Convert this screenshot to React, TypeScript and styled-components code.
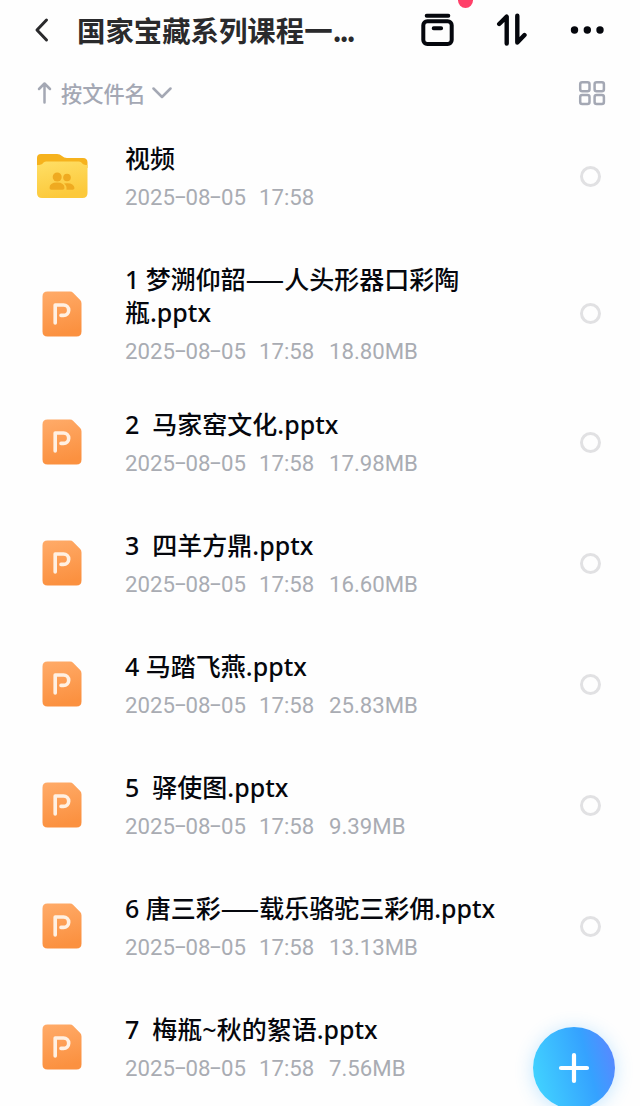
import React from 'react';
import styled, { createGlobalStyle } from 'styled-components';

const Global = createGlobalStyle`
  *, *::before, *::after { box-sizing: border-box; }
  body { margin: 0; background: #fefefe; }
`;

const Screen = styled.main`
  position: relative;
  width: 640px;
  height: 1106px;
  overflow: hidden;
  background: #fefefe;
  font-family: Roboto, 'Noto Sans CJK SC', sans-serif;
  color: #05070d;
`;

const Header = styled.header`
  display: flex;
  align-items: center;
  height: 60px;
  padding: 0 34px 1px 33px;
`;

const Title = styled.h1`
  flex: 1;
  margin: 0 0 0 27px;
  font-family: 'Noto Sans CJK SC', sans-serif;
  font-size: 28.4px;
  font-weight: 700;
  line-height: 40px;
  color: #2a2a2c;
  white-space: nowrap;
`;

const Ellipsis = styled.span`
  letter-spacing: -2.2px;
`;

const Actions = styled.nav`
  display: flex;
  align-items: center;
  gap: 42px;
`;

const IconButton = styled.button`
  position: relative;
  display: flex;
  padding: 0;
  border: 0;
  background: none;
  color: inherit;
`;

const Badge = styled.span`
  position: absolute;
  top: -20px;
  right: -19px;
  width: 15px;
  height: 15px;
  border-radius: 50%;
  background: #ff4069;
`;

const SortBar = styled.div`
  display: flex;
  align-items: center;
  justify-content: space-between;
  height: 55px;
  padding: 11px 34px 0 36px;
  color: #a4a8b4;
`;

const SortButton = styled.button`
  display: flex;
  align-items: center;
  padding: 0;
  border: 0;
  background: none;
  color: inherit;
  font-family: 'Noto Sans CJK SC', sans-serif;
  font-size: 21.2px;
  font-weight: 500;
  line-height: 30px;
`;

const SortLabel = styled.span`
  margin: 0 6px 0 7px;
`;

const List = styled.ul`
  margin: 0;
  padding: 0;
  list-style: none;
`;

const Row = styled.li`
  min-height: 121px;
  padding: 27px 39px 17px 36px;
`;

const RowBody = styled.div`
  display: flex;
  align-items: center;
`;

const IconSlot = styled.div`
  display: flex;
  justify-content: center;
  width: 52px;
  margin-right: 37px;
`;

const Details = styled.div`
  flex: 1;
`;

const Name = styled.div`
  height: 33px;
  padding-top: 1px;
  font-size: 25px;
  font-weight: 500;
  line-height: 33px;
  white-space: pre;
`;

const Latin = styled.span`
  font-family: 'Noto Sans', sans-serif;
  line-height: 0;
`;

const Dash = styled.span`
  font-family: 'Noto Sans CJK SC', sans-serif;
  font-size: 22.5px;
  font-weight: 700;
  line-height: 0;
  vertical-align: 1px;
`;

const Meta = styled.div`
  display: flex;
  height: 35px;
  padding-top: 6px;
  font-family: Roboto, sans-serif;
  font-size: 22.2px;
  font-weight: 400;
  line-height: 33px;
  color: #a9acb3;
  white-space: nowrap;
`;

const DateText = styled.span`
  width: 134px;
`;

const Hyphen = styled.span`
  display: inline-block;
  width: 10.6px;
  line-height: 1;
  text-align: center;
  transform: translateY(-1px) scaleX(1.75);
`;

const TimeText = styled.span`
  width: 70px;
`;

const SizeText = styled.span``;

const Radio = styled.span`
  width: 21px;
  height: 21px;
  border: 3px solid #e1e1e3;
  border-radius: 50%;
`;

const AddButton = styled.button`
  position: absolute;
  left: 533px;
  top: 1027px;
  display: flex;
  align-items: center;
  justify-content: center;
  width: 82px;
  height: 82px;
  padding: 0;
  border: 0;
  border-radius: 50%;
  background: linear-gradient(75deg, #41d2ff 8%, #35a2ff 65%, #5b86ff 95%);
  box-shadow: 0 2px 18px rgba(60, 175, 255, 0.3);
`;

const BackIcon = () => (
  <svg width="17" height="26" viewBox="0 0 17 26" fill="none" stroke="#2a2a2c" strokeWidth="3" strokeLinecap="round" strokeLinejoin="round">
    <path d="M13.5 3 4 13l9.500 10" />
  </svg>
);

const BoxIcon = () => (
  <svg width="34" height="34" viewBox="0 0 34 34" fill="none" stroke="currentColor" strokeWidth="4" strokeLinecap="round">
    <path d="M6.700 2.700h21.600M13.700 15.200h7.400" />
    <rect x="3.300" y="8.200" width="28.400" height="22.800" rx="4" />
  </svg>
);

const TransferIcon = () => (
  <svg width="32" height="34" viewBox="0 0 32 34" fill="none" stroke="currentColor" strokeWidth="4.400" strokeLinecap="round" strokeLinejoin="round">
    <path d="M3.200 11 10.700 3.700v26.800M21.300 2.700v26.800l7.200-7.500" />
  </svg>
);

const MoreIcon = () => (
  <svg width="36" height="10" viewBox="0 0 36 10" fill="currentColor">
    <circle cx="4.500" cy="5" r="3.700" />
    <circle cx="17.300" cy="5" r="3.700" />
    <circle cx="30" cy="5" r="3.700" />
  </svg>
);

const ArrowUpIcon = () => (
  <svg width="18" height="24" viewBox="0 0 18 24" fill="none" stroke="currentColor" strokeWidth="2.500" strokeLinecap="round" strokeLinejoin="round">
    <path d="M8.500 21.500V2.500M3 8l5.500-5.500L14 8" />
  </svg>
);

const ChevronIcon = () => (
  <svg width="20" height="14" viewBox="0 0 20 14" fill="none" stroke="currentColor" strokeWidth="2.500" strokeLinecap="round" strokeLinejoin="round">
    <path d="m1.500 2.500 8.500 8.500 8.500-8.500" />
  </svg>
);

const GridIcon = () => (
  <svg width="28" height="26" viewBox="0 0 28 26" fill="none" stroke="currentColor" strokeWidth="2.500">
    <rect x="2.200" y="2.200" width="9.300" height="9" rx="2" />
    <rect x="16.600" y="2.200" width="9.300" height="9" rx="2" />
    <rect x="2.200" y="15" width="9.300" height="9" rx="2" />
    <rect x="16.600" y="15" width="9.300" height="9" rx="2" />
  </svg>
);

const FolderIcon = () => (
  <svg width="52" height="46" viewBox="0 0 52 46">
    <defs>
      <linearGradient id="folder-front" x1="0" y1="0" x2="0.300" y2="1">
        <stop offset="0" stopColor="#ffdf66" />
        <stop offset="1" stopColor="#fcc93b" />
      </linearGradient>
    </defs>
    <path d="M1 15V5q0-4 4-4h16q3 0 5 2t5 2h16q4.500 0 4.500 4.500V15z" fill="#f6b21d" />
    <path d="M1 12q5 0 6-2 1-1.500 3-1.500h33q2 0 3 1.500 1 2 5.500 2v28q0 5-5 5H6q-5 0-5-5z" fill="url(#folder-front)" />
    <g fill="#efaa20">
      <circle cx="21.200" cy="24" r="4.500" />
      <circle cx="31" cy="24.500" r="3.800" />
      <path d="M13.500 35q0-5.500 7.500-5.500T28.500 35q0 1.800-2 1.800h-11q-2 0-2-1.800zM28 30.500q9.500-1.500 10.500 4.500 0 1.800-2 1.800h-6q.5-4.300-2.500-6.300z" />
    </g>
  </svg>
);

const SlidesIcon = () => (
  <svg width="40" height="46" viewBox="0 0 40 46">
    <defs>
      <linearGradient id="slides-fill" x1="0" y1="0" x2="0.200" y2="1">
        <stop offset="0" stopColor="#ffab69" />
        <stop offset="1" stopColor="#fb9140" />
      </linearGradient>
    </defs>
    <path d="M5.500.5H28q2 0 3.300 1.400l6.900 7.200q1.300 1.400 1.300 3.400V40.500q0 5-5 5h-29q-5 0-5-5v-35q0-5 5-5z" fill="url(#slides-fill)" />
    <path d="M13.200 32V14h8.300a5.200 5.200 0 0 1 0 10.400H19" fill="none" stroke="#fff0e2" strokeWidth="3.600" strokeLinecap="round" strokeLinejoin="round" />
  </svg>
);

const PlusIcon = () => (
  <svg width="32" height="32" viewBox="0 0 32 32" stroke="#fff" strokeWidth="4.200" strokeLinecap="round">
    <path d="M16 3v26M3 16h26" />
  </svg>
);

type FileEntry = { lines: string[]; size?: string };

const files: FileEntry[] = [
  { lines: ['视频'] },
  { lines: ['1 梦溯仰韶——人头形器口彩陶', '瓶.pptx'], size: '18.80MB' },
  { lines: ['2  马家窑文化.pptx'], size: '17.98MB' },
  { lines: ['3  四羊方鼎.pptx'], size: '16.60MB' },
  { lines: ['4 马踏飞燕.pptx'], size: '25.83MB' },
  { lines: ['5  驿使图.pptx'], size: '9.39MB' },
  { lines: ['6 唐三彩——载乐骆驼三彩佣.pptx'], size: '13.13MB' },
  { lines: ['7  梅瓶~秋的絮语.pptx'], size: '7.56MB' },
];

const renderName = (text: string) =>
  text.split(/(——|[\x20-\x7e]+)/).map((part, i) => {
    if (part === '——') return <Dash key={i}>{part}</Dash>;
    if (/^[\x20-\x7e]+$/.test(part)) return <Latin key={i}>{part}</Latin>;
    return part;
  });

export default function App() {
  return (
    <Screen>
      <Global />
      <Header>
        <IconButton aria-label="返回"><BackIcon /></IconButton>
        <Title>国家宝藏系列课程一<Ellipsis>...</Ellipsis></Title>
        <Actions>
          <IconButton><BoxIcon /><Badge /></IconButton>
          <IconButton><TransferIcon /></IconButton>
          <IconButton><MoreIcon /></IconButton>
        </Actions>
      </Header>
      <SortBar>
        <SortButton>
          <ArrowUpIcon />
          <SortLabel>按文件名</SortLabel>
          <ChevronIcon />
        </SortButton>
        <IconButton><GridIcon /></IconButton>
      </SortBar>
      <List>
        {files.map((file) => (
          <Row key={file.lines[0]}>
            <RowBody>
              <IconSlot>{file.size ? <SlidesIcon /> : <FolderIcon />}</IconSlot>
              <Details>
                {file.lines.map((line) => (
                  <Name key={line}>{renderName(line)}</Name>
                ))}
                <Meta>
                  <DateText>2025<Hyphen>-</Hyphen>08<Hyphen>-</Hyphen>05</DateText>
                  <TimeText>17:58</TimeText>
                  {file.size && <SizeText>{file.size}</SizeText>}
                </Meta>
              </Details>
              <Radio />
            </RowBody>
          </Row>
        ))}
      </List>
      <AddButton><PlusIcon /></AddButton>
    </Screen>
  );
}
